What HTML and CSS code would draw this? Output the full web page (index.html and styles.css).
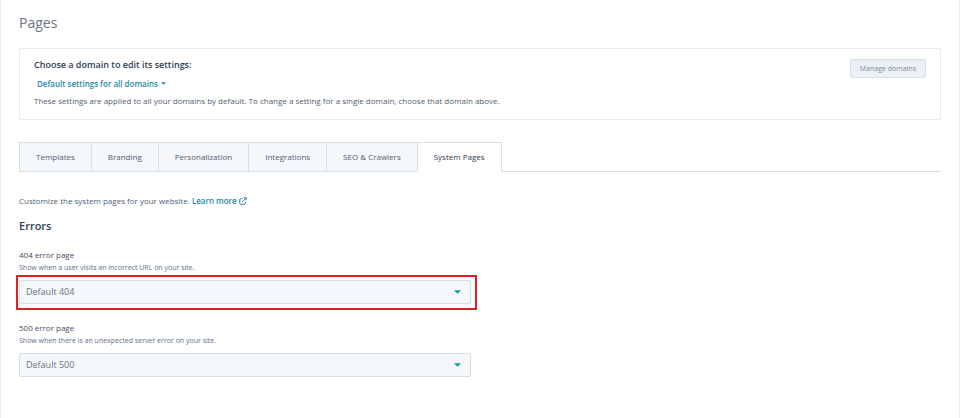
FILE: index.html
```
<!DOCTYPE html>
<html lang="en">
<head>
    <meta charset="UTF-8">
    <meta name="viewport" content="width=device-width, initial-scale=1.0">
    <title>Pages</title>
    <link rel="stylesheet" href="styles.css">
</head>
<body>

<main class="page">
    <h1>Pages</h1>

    <!-- Domain picker -->
    <section class="domain-card">
        <div class="domain-info">
            <label class="domain-label" for="domain">Choose a domain to edit its settings:</label>
            <div class="domain-select">
                <select id="domain">
                    <option>Default settings for all domains</option>
                </select>
                <svg class="domain-caret" viewBox="0 0 6 3"><path d="M0 0h6L3 3z"/></svg>
            </div>
            <p>These settings are applied to all your domains by default. To change a setting for a single domain, choose that domain above.</p>
        </div>
        <button type="button" class="manage-button">Manage domains</button>
    </section>

    <!-- Tabs -->
    <div class="tabs" role="tablist">
        <button type="button" class="tab" role="tab">Templates</button>
        <button type="button" class="tab" role="tab">Branding</button>
        <button type="button" class="tab" role="tab">Personalization</button>
        <button type="button" class="tab" role="tab">Integrations</button>
        <button type="button" class="tab" role="tab">SEO &amp; Crawlers</button>
        <button type="button" class="tab active" role="tab" aria-selected="true">System Pages</button>
    </div>

    <p class="intro">Customize the system pages for your website.
        <a href="#">Learn more<svg class="external" viewBox="0 0 16 16"><path d="M7 3.500H3A1.500 1.500 0 0 0 1.500 5v8A1.500 1.500 0 0 0 3 14.500h8a1.500 1.500 0 0 0 1.500-1.500V9M9.500 1.500h5v5M14 2L6 10"/></svg></a>
    </p>

    <h2>Errors</h2>

    <!-- 404 -->
    <div class="field">
        <label for="error404">404 error page</label>
        <p class="help">Show when a user visits an incorrect URL on your site.</p>
        <div class="select-box highlighted">
            <select id="error404">
                <option>Default 404</option>
            </select>
            <svg class="caret" viewBox="0 0 8 4"><path d="M0 0h8L4 4z"/></svg>
        </div>
    </div>

    <!-- 500 -->
    <div class="field">
        <label for="error500">500 error page</label>
        <p class="help">Show when there is an unexpected server error on your site.</p>
        <div class="select-box">
            <select id="error500">
                <option>Default 500</option>
            </select>
            <svg class="caret" viewBox="0 0 8 4"><path d="M0 0h8L4 4z"/></svg>
        </div>
    </div>
</main>

</body>
</html>
```
FILE: styles.css
```
* {
    box-sizing: border-box;
}
body {
    margin: 0;
    font-family: "Open Sans", "Liberation Sans", sans-serif;
    font-size: 8px;
    line-height: 12px;
    color: #516070;
    background-color: #fff;
}
h1, h2, p {
    margin: 0;
}
button, select {
    font-family: inherit;
    color: inherit;
    margin: 0;
}
select {
    appearance: none;
    cursor: pointer;
}
.page {
    min-height: 100vh;
    padding: 14px 18px;
    border-left: 1px solid #eee;
    border-right: 1px solid #eee;
}
h1 {
    font-size: 14px;
    line-height: 18px;
    font-weight: 400;
    color: #6a7482;
    margin-bottom: 16px;
}
.domain-card {
    display: flex;
    justify-content: space-between;
    align-items: flex-start;
    padding: 10px 14px 9px;
    border: 1px solid #e9ebed;
}
.domain-label {
    display: block;
    font-size: 9px;
    font-weight: 600;
    color: #2d3e50;
}
.domain-select {
    display: flex;
    align-items: center;
    gap: 3px;
    padding: 0 3px;
    margin: 6px 0;
    color: #2489a6;
}
.domain-select select {
    height: 12px;
    padding: 0;
    border: none;
    background: none;
    font-size: 8px;
    font-weight: 600;
}
.domain-caret {
    width: 5px;
    height: 3px;
    fill: #2489a6;
}
.domain-info p {
    margin-bottom: 3px;
}
.manage-button {
    height: 19px;
    padding: 0 9px;
    border: 1px solid #d5dfea;
    border-radius: 2px;
    background-color: #eaf0f6;
    color: #7f8b9b;
    font-size: 7px;
    cursor: pointer;
}
.tabs {
    display: flex;
    margin-top: 22px;
    border-bottom: 1px solid #d7e0e5;
}
.tab {
    height: 30px;
    padding: 0 16px 2px;
    margin-bottom: -1px;
    border: 1px solid #d7e0e5;
    border-right: none;
    background-color: #f5f8fa;
    font-size: 8px;
    cursor: pointer;
}
.tab.active {
    border-right: 1px solid #d7e0e5;
    border-bottom-color: #fff;
    background-color: #fff;
    color: #2d3e50;
}
.intro {
    margin-top: 23px;
}
.intro a {
    color: #2489a6;
    font-weight: 600;
    text-decoration: none;
}
.external {
    width: 8px;
    height: 8px;
    margin-left: 2px;
    vertical-align: -1px;
    fill: none;
    stroke: #3f7fa6;
    stroke-width: 2;
}
h2 {
    font-size: 11px;
    line-height: 16px;
    font-weight: 600;
    color: #2d3e50;
    margin: 11px 0 15px;
}
.field {
    width: 49%;
    margin-bottom: 18px;
}
.field label {
    display: block;
    line-height: 12px;
    color: #3f4d5e;
}
.help {
    margin-top: 1px;
    font-size: 7px;
    color: #5c6f87;
}
.select-box {
    position: relative;
    margin-top: 6px;
}
.select-box select {
    display: block;
    width: 100%;
    height: 24px;
    padding: 0 6px 2px;
    border: 1px solid #d5dfe6;
    border-radius: 2px;
    background-color: #f5f8fa;
    color: #65707f;
    font-size: 9px;
}
.caret {
    position: absolute;
    right: 10px;
    top: 10px;
    width: 7px;
    height: 4px;
    fill: #0f9bb0;
    pointer-events: none;
}
/* red frame round the field */
.highlighted::after {
    content: "";
    position: absolute;
    inset: -5px -6px -6px -3px;
    border: 2px solid #e02020;
    pointer-events: none;
}
```
